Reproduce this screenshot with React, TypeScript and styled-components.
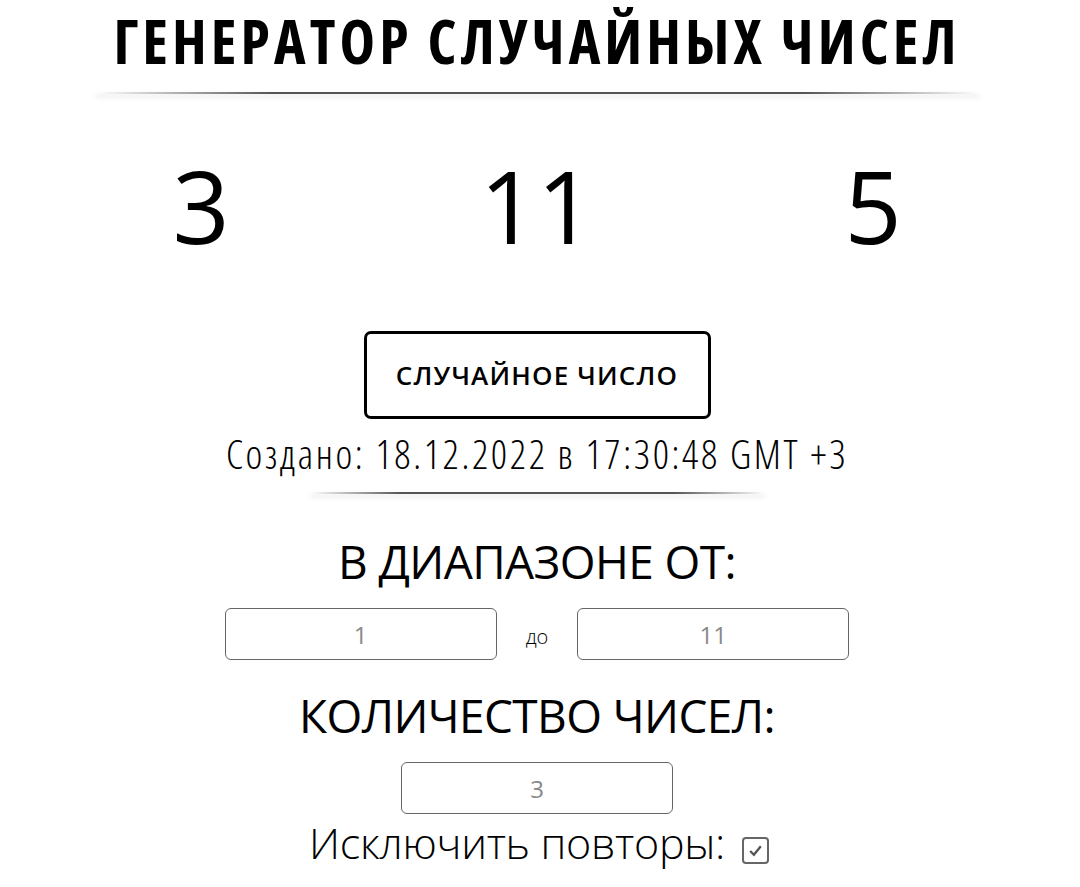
import { useState } from 'react';
import styled, { createGlobalStyle } from 'styled-components';

const GlobalStyle = createGlobalStyle`
  html, body {
    margin: 0;
    padding: 0;
    background: #fff;
  }
  body {
    font-family: 'Open Sans', 'Noto Sans', sans-serif;
    color: #000;
  }
`;

const Page = styled.div`
  width: 1074px;
  display: flex;
  flex-direction: column;
  align-items: center;
  overflow: hidden;
`;

// condensed faces only exist for the light and bold weights
const Title = styled.h1`
  margin: 5px 0 0;
  font-size: 60px;
  line-height: 72px;
  font-weight: 700;
  font-stretch: 75%;
  letter-spacing: 4.1px;
  white-space: nowrap;
`;

const Divider = styled.div<{ $width: number; $top: number }>`
  width: ${(p) => p.$width}px;
  height: 2px;
  margin-top: ${(p) => p.$top}px;
  background: linear-gradient(to right, rgba(0, 0, 0, 0), #555 20%, #555 80%, rgba(0, 0, 0, 0));
  box-shadow: 0 3px 5px rgba(0, 0, 0, 0.12);
`;

const Numbers = styled.div`
  width: 1008px;
  display: grid;
  grid-template-columns: repeat(3, 1fr);
  margin-top: 51px;
`;

const NumberCell = styled.div`
  text-align: center;
  font-size: 100px;
  line-height: 120px;
  font-weight: 400;
`;

const GenerateButton = styled.button`
  margin-top: 66px;
  width: 347px;
  height: 88px;
  border: 3px solid #000;
  border-radius: 7px;
  background: #fff;
  font-family: 'Open Sans', sans-serif;
  font-size: 26px;
  font-weight: 600;
  letter-spacing: 1.2px;
  color: #000;
  cursor: pointer;
`;

const Created = styled.div`
  margin-top: 10px;
  font-size: 40px;
  line-height: 50px;
  font-weight: 300;
  font-stretch: 75%;
  letter-spacing: 2.6px;
`;

const Heading = styled.div<{ $top: number }>`
  margin-top: ${(p) => p.$top}px;
  font-size: 46px;
  line-height: 60px;
  font-weight: 400;
  letter-spacing: -0.6px;
`;

const Row = styled.div`
  display: flex;
  align-items: center;
  gap: 29px;
  margin-top: 17px;
`;

const NumberInput = styled.input`
  box-sizing: border-box;
  width: 272px;
  height: 52px;
  border: 1px solid #666;
  border-radius: 6px;
  background: #fff;
  text-align: center;
  font-family: 'Open Sans', sans-serif;
  font-size: 24px;
  font-weight: 400;
  color: #888;
  outline: none;
`;

const Small = styled.span`
  font-size: 20px;
  font-weight: 300;
  color: #000;
  padding-top: 4px;
`;

const CheckLabel = styled.label`
  display: flex;
  align-items: center;
  gap: 17px;
  margin-top: 0;
  padding-left: 4px;
  font-size: 43px;
  line-height: 58px;
  font-weight: 300;
  letter-spacing: -0.3px;
`;

const Box = styled.span`
  width: 27px;
  height: 27px;
  box-sizing: border-box;
  border: 2px solid #666;
  border-radius: 4px;
  display: flex;
  align-items: center;
  justify-content: center;
  margin-top: 15px;
`;

export default function App() {
  const [from, setFrom] = useState('1');
  const [to, setTo] = useState('11');
  const [count, setCount] = useState('3');
  const [numbers] = useState([3, 11, 5]);

  return (
    <>
      <GlobalStyle />
      <Page>
        <Title>ГЕНЕРАТОР СЛУЧАЙНЫХ ЧИСЕЛ</Title>
        <Divider $width={885} $top={15} />
        <Numbers>
          {numbers.map((n, i) => (
            <NumberCell key={i}>{n}</NumberCell>
          ))}
        </Numbers>
        <GenerateButton>СЛУЧАЙНОЕ ЧИСЛО</GenerateButton>
        <Created>Создано: 18.12.2022 в 17:30:48 GMT +3</Created>
        <Divider $width={455} $top={13} />
        <Heading $top={37}>В ДИАПАЗОНЕ ОТ:</Heading>
        <Row>
          <NumberInput value={from} onChange={(e) => setFrom(e.target.value)} />
          <Small>до</Small>
          <NumberInput value={to} onChange={(e) => setTo(e.target.value)} />
        </Row>
        <Heading $top={25}>КОЛИЧЕСТВО ЧИСЕЛ:</Heading>
        <Row>
          <NumberInput value={count} onChange={(e) => setCount(e.target.value)} />
        </Row>
        <CheckLabel>
          Исключить повторы:
          <Box>
            <svg width="17" height="17" viewBox="0 0 16 16">
              <path d="M3 8.5 L6.5 12 L13 4" fill="none" stroke="#555" strokeWidth="2.2" />
            </svg>
          </Box>
        </CheckLabel>
      </Page>
    </>
  );
}
